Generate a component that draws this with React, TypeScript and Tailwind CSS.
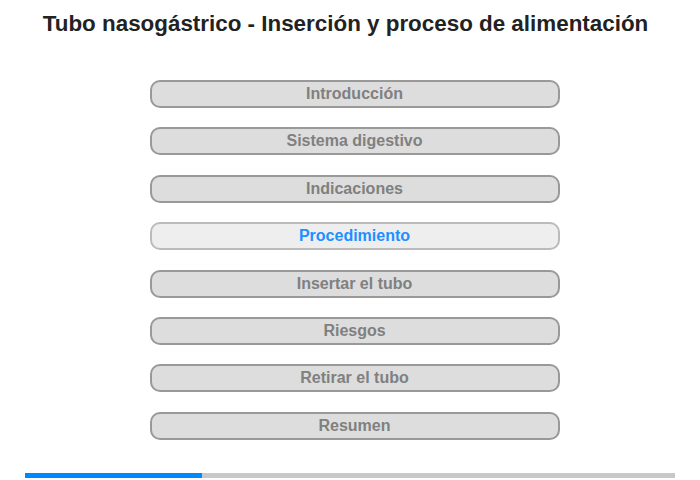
export default function App() {
  const items = [
    "Introducción",
    "Sistema digestivo",
    "Indicaciones",
    "Procedimiento",
    "Insertar el tubo",
    "Riesgos",
    "Retirar el tubo",
    "Resumen",
  ];
  return (
    <div
      className="w-[700px] h-[480px] bg-white flex flex-col"
      style={{ fontFamily: '"Liberation Sans", Arial, sans-serif' }}
    >
      <h1 className="text-center text-[22.4px] leading-[26px] font-bold text-[#222] pt-[11px] pr-[9px]">
        Tubo nasogástrico - Inserción y proceso de alimentación
      </h1>
      <div className="flex flex-col items-center gap-[19.4px] mt-[43px] pl-[9px]">
        {items.map((t) =>
          t === "Procedimiento" ? (
            <div
              key={t}
              className="w-[410px] h-[28px] rounded-[10px] border-2 border-[#bbbbbb] bg-[#eeeeee] flex items-center justify-center text-[16px] font-bold text-[#1e90ff]"
            >
              {t}
            </div>
          ) : (
            <div
              key={t}
              className="w-[410px] h-[28px] rounded-[10px] border-2 border-[#999999] bg-[#dddddd] flex items-center justify-center text-[16px] font-bold text-[#808080]"
            >
              {t}
            </div>
          )
        )}
      </div>
      <div className="mt-auto mb-[2px] mx-[25px] h-[5px] bg-[#c8c8c8] flex">
        <div className="w-[177px] h-full bg-[#0088ff]" />
      </div>
    </div>
  );
}
